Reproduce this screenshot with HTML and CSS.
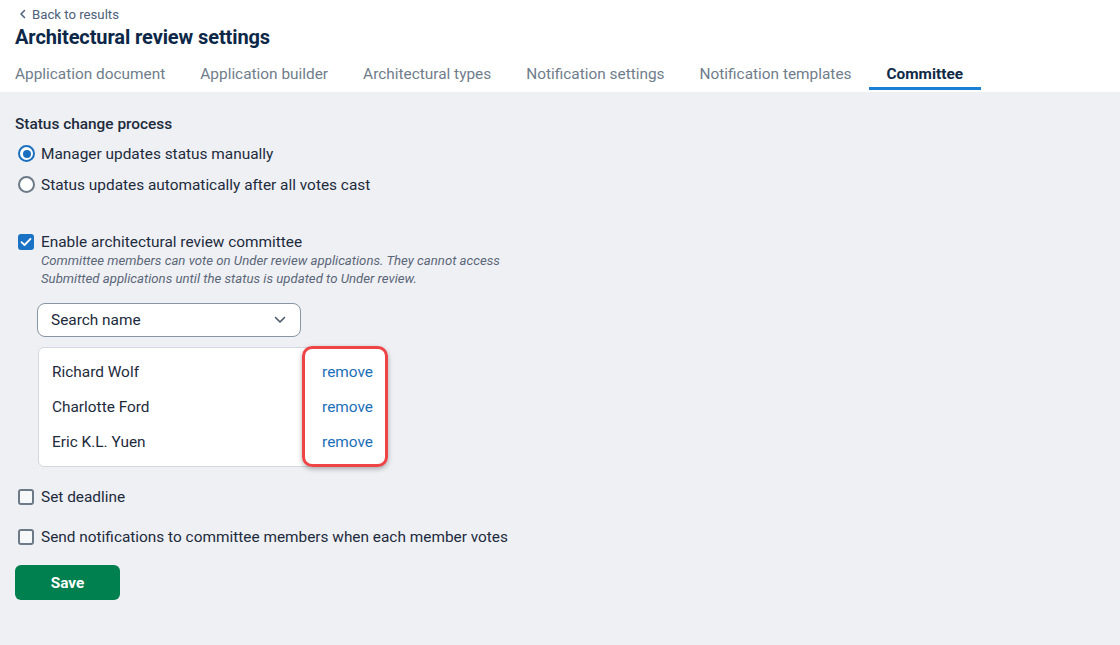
FILE: index.html
```html
<!DOCTYPE html>
<html lang="en">
<head>
<meta charset="utf-8">
<title>Architectural review settings</title>
<link rel="stylesheet" href="styles.css">
</head>
<body>
<header class="header">
  <a class="back" href="#">
    <svg class="back-icon" width="8" height="10" viewBox="0 0 8 10"><path d="M5.5 1.5 2 5l3.5 3.5" fill="none" stroke="currentColor" stroke-width="1.5" stroke-linecap="round" stroke-linejoin="round"/></svg>
    Back to results
  </a>
  <h1 class="title">Architectural review settings</h1>
  <nav class="tabs">
    <a class="tab first" href="#">Application document</a>
    <a class="tab" href="#">Application builder</a>
    <a class="tab" href="#">Architectural types</a>
    <a class="tab" href="#">Notification settings</a>
    <a class="tab" href="#">Notification templates</a>
    <a class="tab active" href="#">Committee</a>
  </nav>
</header>
<main class="main">
  <div class="section-title">Status change process</div>
  <label class="radio-row"><span class="radio checked"></span>Manager updates status manually</label>
  <label class="radio-row"><span class="radio"></span>Status updates automatically after all votes cast</label>

  <label class="check-row enable"><span class="check checked"><svg width="12" height="10" viewBox="0 0 12 10"><path d="M1.5 5.2 4.5 8 10.5 1.8" fill="none" stroke="#fff" stroke-width="1.8" stroke-linecap="round" stroke-linejoin="round"/></svg></span>Enable architectural review committee</label>
  <p class="help">Committee members can vote on Under review applications. They cannot access<br>Submitted applications until the status is updated to Under review.</p>

  <div class="select">
    <span>Search name</span>
    <svg width="12" height="8" viewBox="0 0 12 8"><path d="M1.5 1.5 6 6l4.5-4.5" fill="none" stroke="#4a5a6a" stroke-width="1.6" stroke-linecap="round" stroke-linejoin="round"/></svg>
  </div>

  <div class="members">
    <div class="member"><span>Richard Wolf</span><a href="#" class="remove">remove</a></div>
    <div class="member"><span>Charlotte Ford</span><a href="#" class="remove">remove</a></div>
    <div class="member"><span>Eric K.L. Yuen</span><a href="#" class="remove">remove</a></div>
    <div class="highlight"></div>
  </div>

  <label class="check-row deadline"><span class="check"></span>Set deadline</label>
  <label class="check-row notify"><span class="check"></span>Send notifications to committee members when each member votes</label>

  <button class="save">Save</button>
</main>
</body>
</html>
```

FILE: styles.css
```css
* { box-sizing: border-box; }
html, body { margin: 0; padding: 0; }
body {
  font-family: Roboto, "Liberation Sans", sans-serif;
  background: #eff0f4;
  color: #1d2b3c;
  width: 1120px;
  height: 645px;
  overflow: hidden;
}
.header {
  background: #fff;
  padding: 6px 15px 0;
  height: 92px;
}
.back {
  display: flex;
  align-items: center;
  gap: 5px;
  height: 16px;
  font-size: 13.2px;
  color: #4c6179;
  text-decoration: none;
  padding-left: 4px;
}
.back-icon { color: #4c6179; }
.title {
  margin: 1px 0 0;
  font-size: 20px;
  line-height: 28px;
  font-weight: 700;
  color: #0c2747;
  letter-spacing: -0.1px;
}
.tabs {
  display: flex;
}
.tab {
  display: block;
  padding: 13px 17.5px 3px;
  font-size: 15.4px;
  line-height: 20px;
  color: #6f7d8b;
  text-decoration: none;
  border-bottom: 3px solid transparent;
}
.tab.first { padding-left: 0; }
.tab.active {
  color: #0f2a47;
  font-weight: 700;
  border-bottom-color: #1a80d6;
}
.main {
  padding: 22px 15px 0;
}
.section-title {
  font-size: 15.4px;
  line-height: 20px;
  font-weight: 500;
  color: #1d2b3c;
  margin-bottom: 4px;
}
.radio-row, .check-row {
  display: flex;
  align-items: center;
  gap: 6px;
  font-size: 15.4px;
  color: #1d2b3c;
  padding-left: 3px;
}
.radio-row { height: 31px; }
.radio {
  width: 17px;
  height: 17px;
  border-radius: 50%;
  border: 2px solid #6c7a88;
  background: #fff;
  display: flex;
  align-items: center;
  justify-content: center;
}
.radio.checked { border-color: #1a6fbf; }
.radio.checked::after {
  content: "";
  width: 8px;
  height: 8px;
  border-radius: 50%;
  background: #1a6fbf;
}
.check-row { height: 20px; gap: 7px; }
.check {
  width: 16px;
  height: 16px;
  border: 2px solid #6c7a88;
  border-radius: 3px;
  background: #f7f8fa;
  display: flex;
  align-items: center;
  justify-content: center;
}
.check.checked {
  background: #1a72c4;
  border-color: #1a72c4;
}
.enable { margin-top: 32px; }
.help {
  margin: 0 0 0 26px;
  font-size: 13.2px;
  line-height: 18px;
  font-style: italic;
  color: #5b6778;
}
.select {
  margin: 15px 0 0 22px;
  width: 264px;
  height: 34px;
  border: 1px solid #8795a5;
  border-radius: 8px;
  background: #fff;
  display: flex;
  align-items: center;
  justify-content: space-between;
  padding: 0 14px 0 13px;
  font-size: 15.4px;
  color: #1d2b3c;
}
.members {
  position: relative;
  margin: 10px 0 0 23px;
  width: 348px;
  background: #fff;
  border: 1px solid #d3d8de;
  border-radius: 6px;
  padding: 6px 12px 7px 13px;
}
.member {
  display: flex;
  justify-content: space-between;
  align-items: center;
  height: 35px;
  font-size: 15.4px;
  color: #1d2b3c;
}
.remove {
  color: #1a6fb8;
  text-decoration: none;
}
.highlight {
  position: absolute;
  top: -2px;
  right: -3px;
  width: 86px;
  height: 121px;
  border: 3px solid #ee4446;
  border-radius: 10px;
  box-shadow: 0 2px 5px rgba(0, 0, 0, 0.3);
}
.deadline { margin-top: 20px; }
.notify { margin-top: 20px; }
.save {
  display: block;
  margin-top: 18px;
  width: 105px;
  height: 35px;
  border: none;
  border-radius: 6px;
  background: #007f4f;
  color: #fff;
  font-family: Roboto, "Liberation Sans", sans-serif;
  font-size: 15.4px;
  font-weight: 700;
}
```
